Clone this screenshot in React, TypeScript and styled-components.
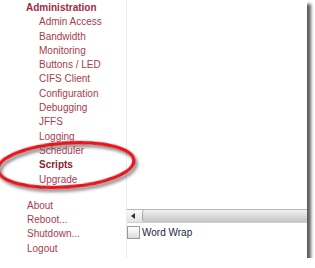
import React from 'react';
import styled, { createGlobalStyle } from 'styled-components';

const GlobalStyle = createGlobalStyle`
  html, body {
    margin: 0;
    padding: 0;
    background: #ffffff;
  }
  body {
    font-family: "Liberation Sans", Arial, sans-serif;
  }
`;

const Frame = styled.div`
  position: relative;
  width: 307px;
  height: 258px;
  background: #ffffff;
  box-shadow: 4px 4px 3px rgba(40, 40, 40, 0.75);
  display: grid;
  grid-template-columns: 127px 1fr;
  overflow: hidden visible;
`;

const Sidebar = styled.nav`
  border-right: 1px solid #ececec;
  padding: 1px 0 0 26px;
  font-size: 10px;
  line-height: 14.3px;
  display: flex;
  flex-direction: column;
`;

const Heading = styled.div`
  font-weight: bold;
  color: #9e2c3e;
`;

const SubList = styled.div`
  display: flex;
  flex-direction: column;
  padding-left: 13px;
  padding-right: 4px;
`;

const Link = styled.a<{ $current?: boolean }>`
  color: ${p => (p.$current ? '#8a1f30' : '#a93b4c')};
  font-weight: ${p => (p.$current ? 'bold' : 'normal')};
  text-decoration: none;
  cursor: pointer;
`;

const BottomList = styled.div`
  display: flex;
  flex-direction: column;
  margin-top: 12px;
  padding-left: 1px;
`;

const Main = styled.div`
  display: flex;
  flex-direction: column;
  min-width: 0;
`;

const LogBox = styled.div`
  height: 209px;
  flex: none;
`;

const ScrollBar = styled.div`
  height: 14px;
  display: flex;
  border-top: 1px solid #b5b5b5;
  border-bottom: 1px solid #d0d0d0;
  box-sizing: border-box;
  background: #ececec;
`;

const ArrowButton = styled.div`
  width: 15px;
  flex: none;
  display: flex;
  align-items: center;
  padding-left: 4px;
  box-sizing: border-box;
  background: linear-gradient(#fafafa, #e2e2e2);
`;

const Thumb = styled.div`
  flex: 1;
  border-left: 1px solid #a8a8a8;
  border-radius: 3px 0 0 3px;
  background: linear-gradient(#f2f2f2 0%, #dcdcdc 45%, #c6c6c6 100%);
`;

const WrapRow = styled.label`
  display: flex;
  align-items: center;
  gap: 2px;
  margin-top: 3px;
  font-size: 10px;
  color: #1e1e3a;
`;

const Box = styled.span`
  width: 11px;
  height: 11px;
  border: 1px solid #9a9a9a;
  background: linear-gradient(#ffffff, #dcdcdc);
  flex: none;
`;

const Annotation = styled.svg`
  position: absolute;
  left: 0;
  top: 138px;
  pointer-events: none;
`;

const items = [
  'Admin Access',
  'Bandwidth Monitoring',
  'Buttons / LED',
  'CIFS Client',
  'Configuration',
  'Debugging',
  'JFFS',
  'Logging',
  'Scheduler',
  'Scripts',
  'Upgrade',
];

const bottom = ['About', 'Reboot...', 'Shutdown...', 'Logout'];

export default function App() {
  return (
    <>
      <GlobalStyle />
      <Frame>
        <Sidebar>
          <Heading>Administration</Heading>
          <SubList>
            {items.map(name => (
              <Link key={name} $current={name === 'Scripts'}>
                {name}
              </Link>
            ))}
          </SubList>
          <BottomList>
            {bottom.map(name => (
              <Link key={name}>{name}</Link>
            ))}
          </BottomList>
        </Sidebar>
        <Main>
          <LogBox />
          <ScrollBar>
            <ArrowButton>
              <svg width="4" height="6" viewBox="0 0 4 6">
                <path d="M4 0 L0 3 L4 6 Z" fill="#333" />
              </svg>
            </ArrowButton>
            <Thumb />
          </ScrollBar>
          <WrapRow>
            <Box />
            Word Wrap
          </WrapRow>
        </Main>
        <Annotation width="145" height="60" viewBox="0 0 145 60">
          <defs>
            <filter id="sh" x="-20%" y="-40%" width="140%" height="180%">
              <feDropShadow dx="2" dy="3" stdDeviation="1.8" floodColor="#555" floodOpacity="0.7" />
            </filter>
          </defs>
          <ellipse
            cx="66"
            cy="27"
            rx="68"
            ry="22"
            transform="rotate(-4 66 27)"
            fill="none"
            stroke="#e5121b"
            strokeWidth="3.4"
            filter="url(#sh)"
          />
        </Annotation>
      </Frame>
    </>
  );
}
